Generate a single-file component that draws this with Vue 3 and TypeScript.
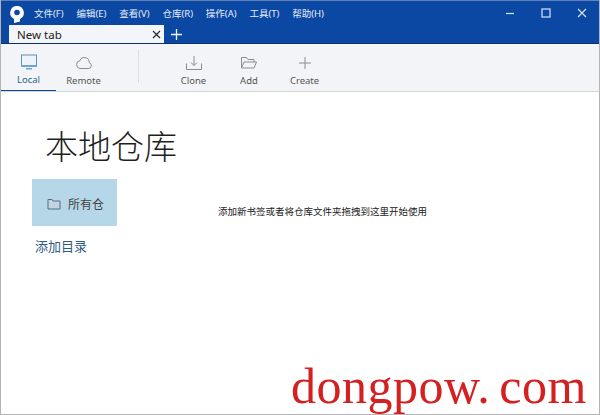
<template>
  <div class="window">
    <header class="titlebar">
      <div class="menu-row">
        <svg class="logo" width="14" height="17" viewBox="0 0 14 17">
          <path d="M7 0a6.800 6.800 0 0 0-3 12.900V17l6-1.500v-2.600A6.800 6.800 0 0 0 7 0z" fill="#fff" />
          <circle cx="7" cy="6.500" r="2.800" fill="#0b48a4" />
        </svg>
        <nav class="menu">
          <span v-for="item in menus" :key="item">{{ item }}</span>
        </nav>
        <div class="win-controls">
          <svg width="10" height="10" viewBox="0 0 10 10"><path d="M1 5.500h8" stroke="#dce6f5" stroke-width="1.200" /></svg>
          <svg width="10" height="10" viewBox="0 0 10 10"><rect x="1" y="1" width="8" height="8" fill="none" stroke="#dce6f5" stroke-width="1.200" /></svg>
          <svg width="10" height="10" viewBox="0 0 10 10"><path d="M1 1l8 8M9 1l-8 8" stroke="#dce6f5" stroke-width="1.100" /></svg>
        </div>
      </div>
      <div class="tab-row">
        <div class="tab">
          <span>New tab</span>
          <svg width="9" height="9" viewBox="0 0 9 9"><path d="M1 1l7 7M8 1l-7 7" stroke="#222" stroke-width="1.100" /></svg>
        </div>
        <svg class="new-tab" width="13" height="13" viewBox="0 0 13 13"><path d="M6.500 1v11M1 6.500h11" stroke="#eef3fb" stroke-width="1.300" /></svg>
      </div>
    </header>

    <div class="toolbar">
      <div class="tool active">
        <svg width="18" height="18" viewBox="0 0 18 18">
          <rect x="1.500" y="2" width="15" height="11" fill="#eef3f7" stroke="#5f8fb3" />
          <rect x="1" y="12" width="16" height="2" fill="#6fa5cc" />
          <rect x="6" y="15" width="6" height="1.500" fill="#6fa5cc" />
        </svg>
        <span>Local</span>
      </div>
      <div class="tool remote">
        <svg width="18" height="18" viewBox="0 0 18 18">
          <path d="M5 14.500h8.500a3 3 0 0 0 .6-5.900A4.700 4.700 0 0 0 5 6.600 4 4 0 0 0 5 14.500z" fill="none" stroke="#8c8c8c" />
        </svg>
        <span>Remote</span>
      </div>
      <div class="divider"></div>
      <div class="tool clone">
        <svg width="18" height="18" viewBox="0 0 18 18">
          <path d="M1.500 9.500v6h15v-6M9 2v9.500M6 8.500l3 3 3-3" fill="none" stroke="#8c8c8c" />
        </svg>
        <span>Clone</span>
      </div>
      <div class="tool add">
        <svg width="18" height="18" viewBox="0 0 18 18">
          <path d="M1.500 14V3.500h5l1.500 2h6V8M1.500 14l2.500-6h12.500l-2.500 6z" fill="none" stroke="#8c8c8c" />
        </svg>
        <span>Add</span>
      </div>
      <div class="tool create">
        <svg width="18" height="18" viewBox="0 0 18 18"><path d="M9 3v12M3 9h12" stroke="#8c8c8c" /></svg>
        <span>Create</span>
      </div>
    </div>

    <main class="content">
      <h1>本地仓库</h1>
      <div class="body-row">
        <aside class="side">
          <div class="repo-item">
            <svg width="14" height="12" viewBox="0 0 14 12">
              <path d="M1 1.500h4l1 1.500h7v8H1z" fill="#c3d4e0" stroke="#4f6f8c" />
            </svg>
            <span>所有仓</span>
          </div>
          <a class="add-dir">添加目录</a>
        </aside>
        <p class="hint">添加新书签或者将仓库文件夹拖拽到这里开始使用</p>
      </div>
    </main>

    <div class="watermark">dongpow. com</div>
  </div>
</template>

<script setup lang="ts">
const menus = ['文件(F)', '编辑(E)', '查看(V)', '仓库(R)', '操作(A)', '工具(T)', '帮助(H)']
</script>

<style>
html,
body {
  margin: 0;
  background: #fff;
}
</style>

<style scoped>
.window {
  position: relative;
  box-sizing: border-box;
  width: 600px;
  height: 415px;
  display: flex;
  flex-direction: column;
  overflow: hidden;
  background: #fff;
  border-left: 1px solid #b4b4b4;
  border-right: 1px solid #b4b4b4;
  border-bottom: 1px solid #b4b4b4;
  font-family: "Noto Sans", "Noto Sans CJK SC", sans-serif;
}

.titlebar {
  background: #0b48a4;
  border-top: 1px solid #5f7fb5;
  border-bottom: 1px solid #0a2f70;
}

.menu-row {
  height: 24px;
  display: flex;
  align-items: center;
  padding-left: 9px;
}

.logo {
  flex: none;
  margin-top: 3px;
}

.menu {
  display: flex;
  gap: 12.800px;
  margin-left: 10px;
  color: #e6edf8;
  font-size: 9.500px;
}

.win-controls {
  margin-left: auto;
  display: flex;
  gap: 26px;
  padding-right: 12px;
}

.tab-row {
  height: 18px;
  display: flex;
  align-items: flex-end;
  padding-left: 8px;
}

.tab {
  box-sizing: border-box;
  width: 155px;
  height: 18px;
  display: flex;
  align-items: center;
  justify-content: space-between;
  padding: 0 3px 0 8px;
  background: #f3f5f8;
  color: #222;
  font-size: 11.500px;
}

.new-tab {
  margin: 0 0 2px 6px;
}

.toolbar {
  height: 47px;
  display: flex;
  background: #f3f4f7;
  border-bottom: 1px solid #d3d5d8;
}

.tool {
  box-sizing: border-box;
  height: 47px;
  display: flex;
  flex-direction: column;
  align-items: center;
  justify-content: flex-end;
  gap: 2px;
  padding-bottom: 4px;
  color: #555;
  font-size: 9.500px;
}

.tool.active {
  width: 55px;
  color: #2f5f8c;
  border-bottom: 1px solid #0b48a4;
}

.remote {
  width: 55px;
}

.divider {
  width: 1px;
  height: 33px;
  margin: 6px 0 0 27px;
  background: #dcdee0;
}

.clone {
  width: 55px;
  margin-left: 27px;
}

.add {
  width: 56px;
}

.create {
  width: 55px;
}

.content {
  flex: 1;
  min-height: 0;
}

h1 {
  margin: 34px 0 0 44px;
  height: 53px;
  color: #1f1f1f;
  font-size: 33px;
  line-height: 42px;
  font-weight: 300;
}

.body-row {
  display: flex;
  align-items: flex-start;
}

.side {
  width: 200px;
  flex: none;
  padding-left: 31px;
  box-sizing: border-box;
}

.repo-item {
  box-sizing: border-box;
  width: 85px;
  height: 47px;
  display: flex;
  align-items: center;
  gap: 7px;
  padding: 2px 0 0 15px;
  background: #b5d7e8;
  color: #444;
  font-size: 12px;
}

.add-dir {
  display: block;
  margin: 11px 0 0 3px;
  color: #2f5c85;
  font-size: 13px;
  line-height: 18px;
}

.hint {
  margin: 26px 0 0 17px;
  color: #222;
  font-size: 9.500px;
  line-height: 14px;
  white-space: nowrap;
}

.watermark {
  position: absolute;
  left: 290px;
  top: 356px;
  color: #d42020;
  font-family: "Liberation Serif", serif;
  font-size: 50px;
  line-height: 60px;
  letter-spacing: 0.500px;
  word-spacing: -4px;
  white-space: nowrap;
}
</style>
